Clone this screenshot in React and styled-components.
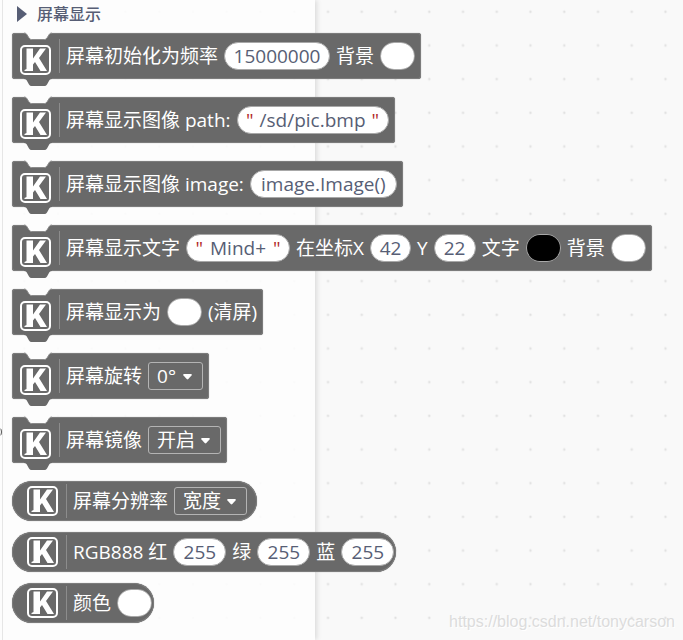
import React, { useState } from "react";
import styled, { createGlobalStyle } from "styled-components";

const GlobalStyle = createGlobalStyle`
  * {
    box-sizing: border-box;
  }

  body {
    margin: 0;
    background: #f9f9f9;
    font-family: "Open Sans", "Noto Sans CJK SC", sans-serif;
    overflow: hidden;
  }
`;

const StyledPage = styled.div`
  position: relative;
  display: flex;
  height: 100vh;
  padding-left: 2px;
  background-color: #f9f9f9;
`;

// dotted canvas behind the whole editor
const StyledDots = styled.div`
  position: absolute;
  inset: 0 0 0 8px;
  background-image: radial-gradient(
    circle at 48% 35%,
    #d6d6d6 0,
    #ececec 1px,
    transparent 2px
  );
  background-size: 34px 34px;
  background-repeat: round;
`;

const StyledRail = styled.div`
  position: absolute;
  inset: 0 auto 0 0;
  z-index: 1;
  display: flex;
  align-items: center;
  width: 3px;
  padding-top: 224px;
  background: #fdfdfd;
  border-right: 1px solid #e6e6e6;
`;

const StyledFlyout = styled.div`
  position: relative;
  width: 313px;
  padding: 4px 0 0 10px;
  background: rgba(254, 254, 254, 0.85);
  box-shadow: 2px 0 5px rgba(0, 0, 0, 0.12);
  white-space: nowrap;
`;

const StyledCategory = styled.h2`
  display: flex;
  align-items: center;
  gap: 10px;
  height: 20px;
  margin: 0 0 9px;
  padding-left: 5px;
  color: #575e75;
  font-size: 16px;
  font-weight: 500;
  line-height: 20px;
`;

const StyledBlock = styled.div`
  position: relative;
  display: flex;
  align-items: center;
  gap: 6px;
  width: max-content;
  height: ${({ $reporter }) => ($reporter ? 40 : 46)}px;
  margin-bottom: ${({ $reporter }) => ($reporter ? 11 : 18)}px;
  padding-left: ${({ $reporter }) => ($reporter ? 15 : 8)}px;
  padding-right: ${({ $end }) => $end || 6}px;
  background: #696969;
  border-radius: ${({ $reporter }) => ($reporter ? 20 : 3)}px;
  box-shadow: inset 0 0 0 1px #7c7c7c, 0 0 1px #8a8a8a;
  color: #fff;
  font-size: 19px;
  line-height: 28px;
`;

const StyledNotch = styled.svg`
  position: absolute;
  left: 12px;
  ${({ $bottom }) => ($bottom ? "top: 45px;" : "top: -1px;")}
`;

const StyledLogo = styled.svg`
  flex: none;
  margin-top: ${({ $reporter }) => ($reporter ? 0 : 7)}px;
`;

const StyledDivider = styled.span`
  width: 1px;
  height: 34px;
  margin-left: 2px;
  background: #8c8c8c;
`;

const StyledInput = styled.input`
  width: ${({ $width }) => $width}px;
  height: 28px;
  padding: 0;
  border: 1px solid #a8a8a8;
  border-radius: 14px;
  background: #fff;
  color: #575e75;
  font: inherit;
  text-align: center;
  outline: none;
`;

const StyledString = styled.label`
  display: flex;
  align-items: center;
  justify-content: center;
  width: ${({ $width }) => $width}px;
  height: 28px;
  border: 1px solid #a8a8a8;
  border-radius: 14px;
  background: #fff;
  color: #b22a2a;

  input {
    width: ${({ $width }) => $width - 34}px;
    height: 24px;
    border: 0;
  }
`;

const StyledSwatch = styled.input`
  width: 35px;
  height: 28px;
  padding: 0;
  border: 1px solid #a8a8a8;
  border-radius: 14px;
  background: none;
  appearance: none;
  overflow: hidden;

  &::-webkit-color-swatch-wrapper {
    padding: 0;
  }

  &::-webkit-color-swatch {
    border: 0;
  }
`;

const StyledDropdown = styled.span`
  position: relative;
  display: flex;

  select {
    width: ${({ $width }) => $width}px;
    height: 28px;
    padding: 0 0 0 8px;
    border: 1px solid #b4b4b4;
    border-radius: 3px;
    background: #696969;
    color: #fff;
    font: inherit;
    line-height: 26px;
    appearance: none;
    outline: none;
  }

  svg {
    position: absolute;
    right: 11px;
    top: 12px;
    pointer-events: none;
  }
`;

const StyledWatermark = styled.a`
  position: absolute;
  right: 8px;
  bottom: 8px;
  color: #dcdcdc;
  font-family: "Liberation Sans", sans-serif;
  font-size: 16px;
  line-height: 20px;
  text-decoration: none;
  text-shadow: 1px 1px 0 #fff;
`;

function Logo({ reporter }) {
  return (
    <StyledLogo $reporter={reporter} width="31" height="30" viewBox="0 0 31 30">
      <rect x="1" y="1" width="29" height="28" rx="4" fill="none" stroke="#fff" strokeWidth="2" />
      <path
        d="M6.500 3.500H13V13.500L20 3.500H26L19 13L27 26H20.500L15 17L13 19.500V26H4.500V25L6.500 24Z"
        fill="#fff"
      />
    </StyledLogo>
  );
}

function Block({ reporter, end, children }) {
  return (
    <StyledBlock $reporter={reporter} $end={end}>
      {!reporter && (
        <>
          <StyledNotch width="28" height="9" viewBox="0 0 28 9">
            <path d="M0 0V1Q1.500 1 2.500 2L5 6Q6 7.500 7.500 7.500H20.500Q22 7.500 23 6L25.500 2Q26.500 1 28 1V0Z" fill="#fdfdfd" />
            <path d="M0 1Q1.500 1 2.500 2L5 6Q6 7.500 7.500 7.500H20.500Q22 7.500 23 6L25.500 2Q26.500 1 28 1" fill="none" stroke="#8a8a8a" />
          </StyledNotch>
          <StyledNotch $bottom width="28" height="9" viewBox="0 0 28 9">
            <path d="M0 0V1Q1.500 1 2.500 2L5 6.500Q6 8 7.500 8H20.500Q22 8 23 6.500L25.500 2Q26.500 1 28 1V0Z" fill="#696969" />
          </StyledNotch>
        </>
      )}
      <Logo reporter={reporter} />
      <StyledDivider />
      {children}
    </StyledBlock>
  );
}

function TextField({ value, width, label }) {
  return <StyledInput aria-label={label} defaultValue={value} $width={width} />;
}

function StringField({ value, width, label }) {
  return (
    <StyledString $width={width}>
      <span>"</span>
      <StyledInput aria-label={label} defaultValue={value} />
      <span>"</span>
    </StyledString>
  );
}

function Color({ value = "#ffffff", label }) {
  return <StyledSwatch type="color" aria-label={label} defaultValue={value} />;
}

function Dropdown({ options, width, label }) {
  const [value, setValue] = useState(options[0]);

  return (
    <StyledDropdown $width={width}>
      <select aria-label={label} value={value} onChange={(e) => setValue(e.target.value)}>
        {options.map((option) => (
          <option key={option}>{option}</option>
        ))}
      </select>
      <svg width="9" height="6" viewBox="0 0 9 6">
        <path d="M1 0H8Q9.300 .3 8.500 1.400L5.300 5Q4.500 5.800 3.700 5L.5 1.400Q-.3 .3 1 0Z" fill="#fff" />
      </svg>
    </StyledDropdown>
  );
}

function App() {
  return (
    <StyledPage>
      <GlobalStyle />
      <StyledDots />
      <StyledRail>
        <svg width="2" height="8" viewBox="0 0 2 8">
          <path d="M0 .5Q1.500 1 1.500 4T0 7.500" fill="none" stroke="#555" />
        </svg>
      </StyledRail>
      <StyledFlyout>
        <StyledCategory>
          <svg width="10" height="16" viewBox="0 0 10 16">
            <path d="M0 0L10 8L0 16Z" fill="#575e75" />
          </svg>
          屏幕显示
        </StyledCategory>
        <Block>
          <span>屏幕初始化为频率</span>
          <TextField label="频率" value="15000000" width={106} />
          <span>背景</span>
          <Color label="背景" />
        </Block>
        <Block>
          <span>屏幕显示图像 path:</span>
          <StringField label="path" value="/sd/pic.bmp" width={152} />
        </Block>
        <Block>
          <span>屏幕显示图像 image:</span>
          <TextField label="image" value="image.Image()" width={147} />
        </Block>
        <Block>
          <span>屏幕显示文字</span>
          <StringField label="文字" value="Mind+" width={104} />
          <span>在坐标X</span>
          <TextField label="X" value="42" width={41} />
          <span>Y</span>
          <TextField label="Y" value="22" width={42} />
          <span>文字</span>
          <Color label="文字" value="#000000" />
          <span>背景</span>
          <Color label="背景" />
        </Block>
        <Block>
          <span>屏幕显示为</span>
          <Color label="屏幕显示为" />
          <span>(清屏)</span>
        </Block>
        <Block>
          <span>屏幕旋转</span>
          <Dropdown label="屏幕旋转" options={["0°", "90°", "180°", "270°"]} width={55} />
        </Block>
        <Block>
          <span>屏幕镜像</span>
          <Dropdown label="屏幕镜像" options={["开启", "关闭"]} width={73} />
        </Block>
        <Block reporter end={10}>
          <span>屏幕分辨率</span>
          <Dropdown label="屏幕分辨率" options={["宽度", "高度"]} width={73} />
        </Block>
        <Block reporter end={2}>
          <span>RGB888 红</span>
          <TextField label="红" value="255" width={53} />
          <span>绿</span>
          <TextField label="绿" value="255" width={53} />
          <span>蓝</span>
          <TextField label="蓝" value="255" width={53} />
        </Block>
        <Block reporter end={2}>
          <span>颜色</span>
          <Color label="颜色" />
        </Block>
      </StyledFlyout>
      <StyledWatermark href="https://blog.csdn.net/tonycarson">
        https://blog.csdn.net/tonycarson
      </StyledWatermark>
    </StyledPage>
  );
}

export default App;
